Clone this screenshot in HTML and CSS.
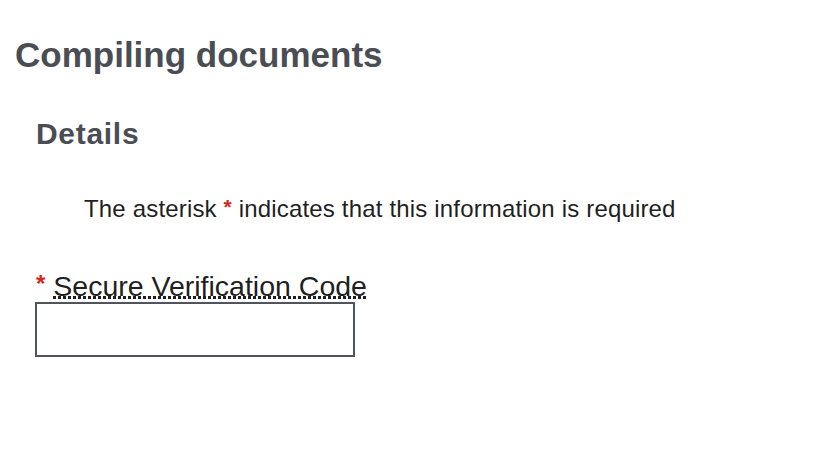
FILE: index.html
```html
<!DOCTYPE html>
<html lang="en">
<head>
<meta charset="utf-8">
<title>Compiling documents</title>
<link rel="stylesheet" href="styles.css">
</head>
<body>
<main class="page">
  <h1 class="title">Compiling documents</h1>
  <section class="details">
    <h2 class="subtitle">Details</h2>
    <p class="note">The asterisk <span class="req req-note">*</span> indicates that this information is required</p>
    <div class="field">
      <label class="label" for="svc"><span class="req req-label">*</span> <span class="label-text">Secure Verification Code</span></label>
      <input class="input" id="svc" type="text">
    </div>
  </section>
</main>
</body>
</html>
```
FILE: styles.css
```css
html, body {
  margin: 0;
  padding: 0;
  background: #ffffff;
}
body {
  font-family: "Liberation Sans", Arial, Helvetica, sans-serif;
  color: #1f1f1f;
}
.page {
  display: flex;
  flex-direction: column;
  padding: 35px 0 0 15px;
}
.title {
  margin: 0;
  font-size: 35px;
  line-height: 40px;
  font-weight: bold;
  color: #4a4e54;
}
.details {
  display: flex;
  flex-direction: column;
  padding-left: 21px;
}
.subtitle {
  margin: 41px 0 0 0;
  font-size: 30px;
  line-height: 36px;
  font-weight: bold;
  color: #4a4e54;
  letter-spacing: 0.7px;
}
.note {
  margin: 43px 0 0 48px;
  font-size: 24px;
  line-height: 28px;
  letter-spacing: 0.17px;
}
.req {
  color: #d0271d;
  font-weight: bold;
  line-height: 0;
}
.req-note {
  font-size: 21px;
  vertical-align: 3px;
}
.req-label {
  font-size: 24px;
  vertical-align: 4px;
}
.field {
  display: flex;
  flex-direction: column;
  align-items: flex-start;
  margin-top: 48px;
}
.label {
  font-size: 28.5px;
  line-height: 31px;
}
.label-text {
  background-image: linear-gradient(to right, #1f1f1f 3px, transparent 3px);
  background-size: 5px 3px;
  background-repeat: repeat-x;
  background-position: 0 calc(100% - 3px);
}
.input {
  display: block;
  margin: 0 0 0 -1px;
  box-sizing: border-box;
  width: 320px;
  height: 55px;
  border: 2px solid #4f545a;
  border-radius: 0;
  padding: 0 8px;
  font-family: inherit;
  font-size: 20px;
  background: #fff;
}
```
